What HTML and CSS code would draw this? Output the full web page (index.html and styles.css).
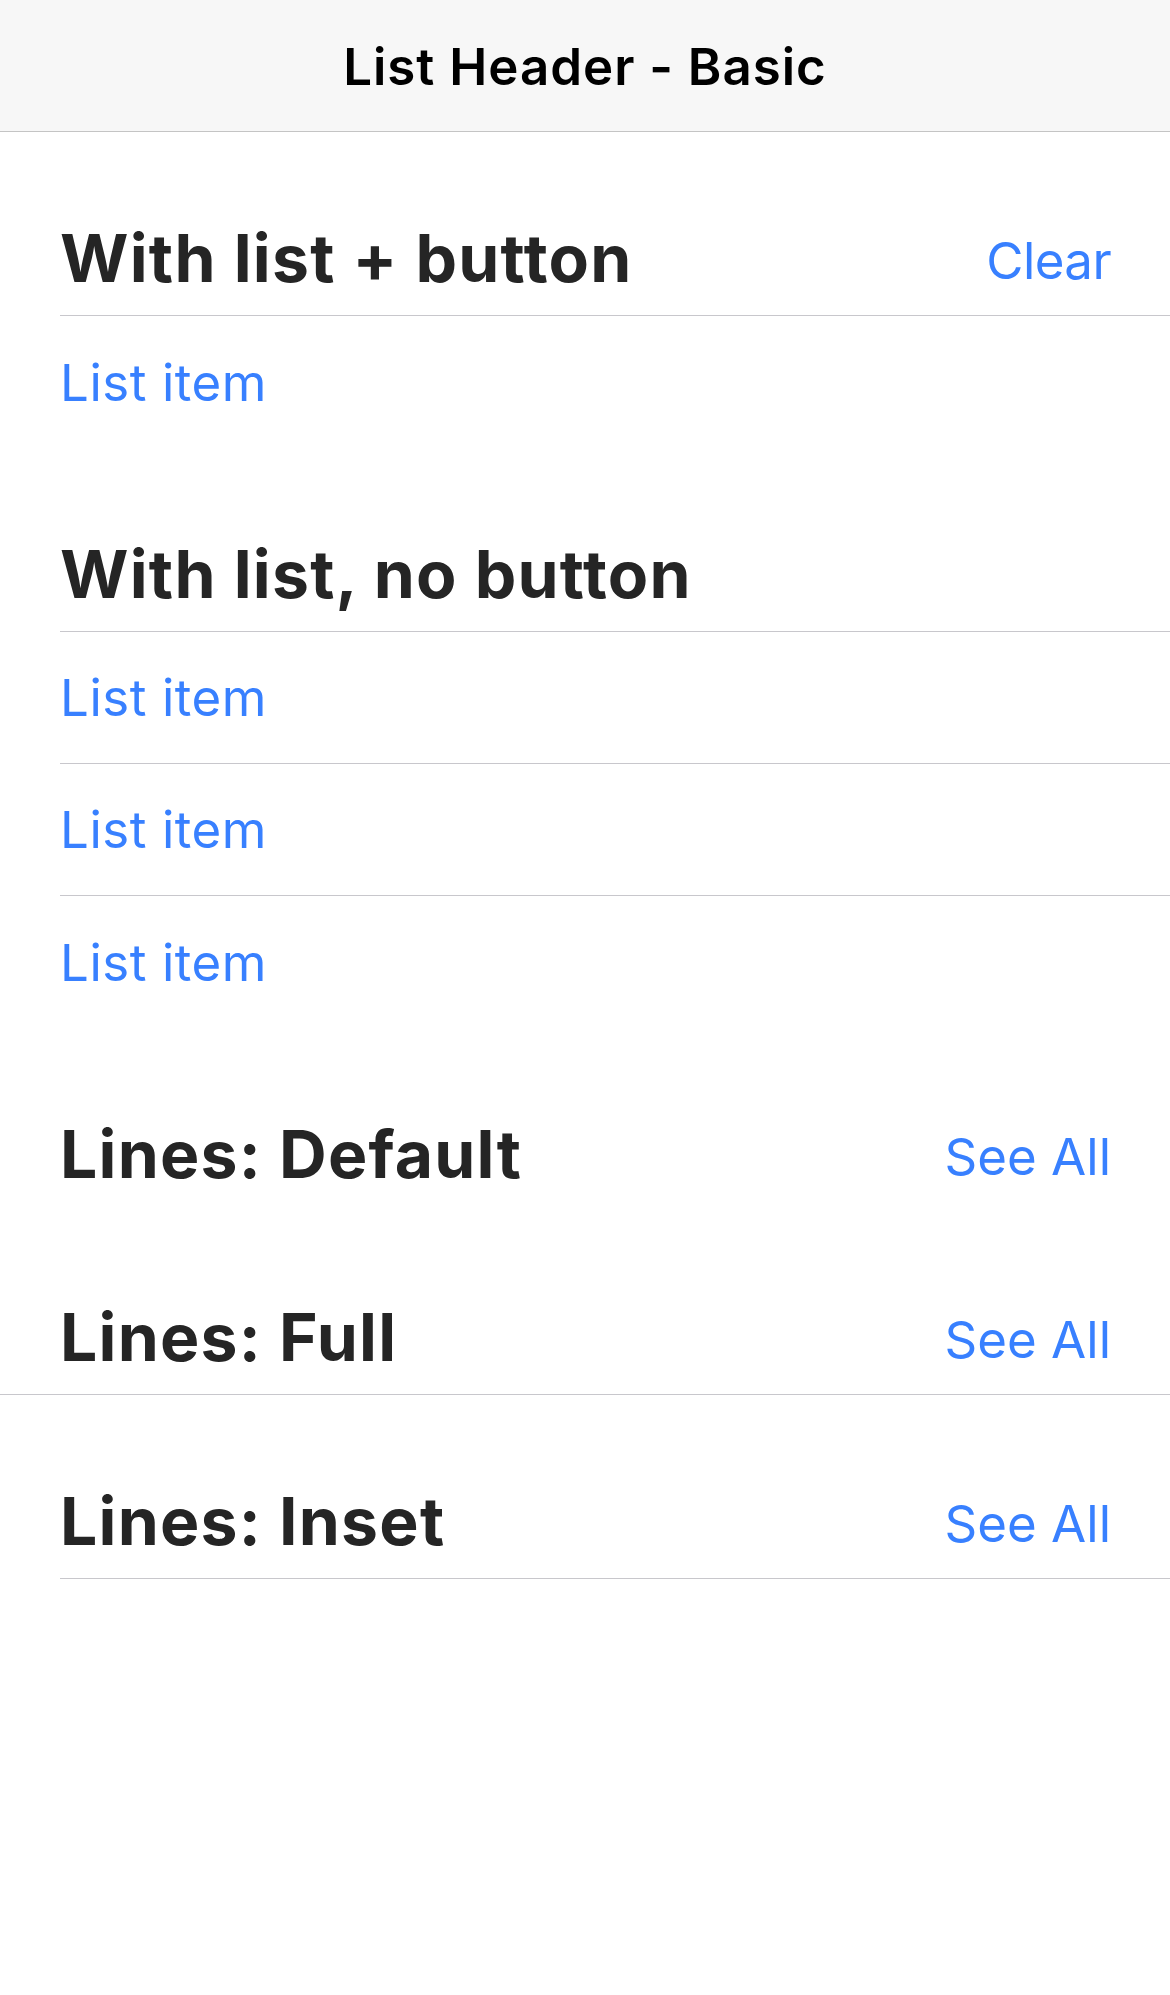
FILE: index.html
```html
<!DOCTYPE html>
<html lang="en">
<head>
<meta charset="utf-8">
<title>List Header - Basic</title>
<link rel="stylesheet" href="styles.css">
</head>
<body>
<header class="toolbar">
  <h1 class="toolbar-title">List Header - Basic</h1>
</header>
<main class="content">
  <section class="list">
    <div class="list-header lines-inset">
      <div class="lh-inner">
        <span class="lh-label">With list + button</span>
        <button class="lh-button lh-button-clear">Clear</button>
      </div>
    </div>
    <div class="item last"><span class="item-label">List item</span></div>
  </section>

  <section class="list">
    <div class="list-header lines-inset">
      <div class="lh-inner">
        <span class="lh-label">With list, no button</span>
      </div>
    </div>
    <div class="item"><span class="item-label">List item</span></div>
    <div class="item"><span class="item-label">List item</span></div>
    <div class="item last"><span class="item-label">List item</span></div>
  </section>

  <div class="list-header">
    <div class="lh-inner">
      <span class="lh-label">Lines: Default</span>
      <button class="lh-button">See All</button>
    </div>
  </div>

  <div class="list-header lines-full">
    <div class="lh-inner">
      <span class="lh-label">Lines: Full</span>
      <button class="lh-button">See All</button>
    </div>
  </div>

  <div class="list-header lines-inset">
    <div class="lh-inner">
      <span class="lh-label">Lines: Inset</span>
      <button class="lh-button">See All</button>
    </div>
  </div>
</main>
</body>
</html>
```

FILE: styles.css
```css
* {
  box-sizing: border-box;
}

html, body {
  margin: 0;
  padding: 0;
  background: #ffffff;
  font-family: Inter, "Noto Sans", "Liberation Sans", sans-serif;
  -webkit-font-smoothing: antialiased;
}

.toolbar {
  height: 132px;
  background: #f7f7f7;
  border-bottom: 1px solid #c4c4c4;
  display: flex;
  align-items: center;
  justify-content: center;
  padding-top: 2px;
}

.toolbar-title {
  margin: 0;
  font-size: 51px;
  font-weight: 600;
  line-height: 1;
  color: #000000;
  letter-spacing: 1px;
}

.content {
  display: flex;
  flex-direction: column;
}

.list {
  display: flex;
  flex-direction: column;
}

.list-header {
  display: flex;
  align-items: flex-end;
  height: 183px;
  padding-left: 60px;
  box-sizing: content-box;
}

.lines-full {
  border-bottom: 1px solid #c8c7cc;
}

.list-header.lines-inset {
  height: 184px;
}

.lh-inner {
  flex: 1;
  display: flex;
  align-items: flex-end;
  justify-content: space-between;
  padding-right: 59px;
  padding-bottom: 24px;
  box-sizing: content-box;
}

.lines-inset .lh-inner {
  border-bottom: 1px solid #c8c7cc;
}

.lh-label {
  font-size: 66px;
  font-weight: 700;
  line-height: 1;
  color: #252525;
  letter-spacing: 1.25px;
}

.lh-button {
  border: 0;
  background: none;
  padding: 0;
  margin: 0 0 5px 0;
  font-family: inherit;
  font-size: 51px;
  font-weight: 400;
  line-height: 1;
  color: #3880ff;
  letter-spacing: 0;
}

.lh-button-clear {
  letter-spacing: -0.6px;
}

.item {
  height: 132px;
  margin-left: 60px;
  display: flex;
  align-items: center;
  border-bottom: 1px solid #c8c7cc;
}

.item.last {
  border-bottom: 0;
}

.item-label {
  font-size: 51px;
  line-height: 1;
  color: #3880ff;
  letter-spacing: 0.55px;
}
```
